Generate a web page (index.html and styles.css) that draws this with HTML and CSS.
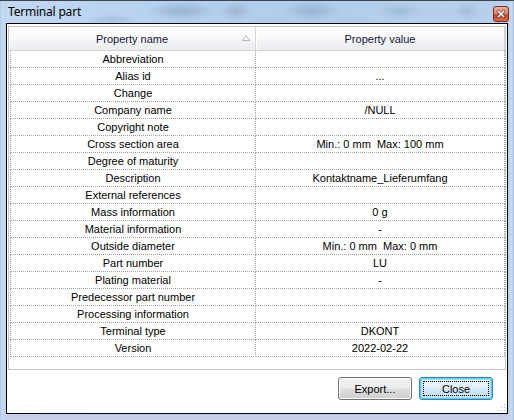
FILE: index.html
```html
<!DOCTYPE html>
<html>
<head>
<meta charset="utf-8">
<link rel="stylesheet" href="styles.css">
</head>
<body>
<div class="window">
  <div class="titlebar">
    <span class="title">Terminal part</span>
    <span class="close-x">
      <svg width="16" height="16" viewBox="0 0 16 16">
        <path d="M5 5 L11 11 M11 5 L5 11" stroke="#5a1d12" stroke-width="3.2" stroke-linecap="square"/>
        <path d="M5 5 L11 11 M11 5 L5 11" stroke="#ffffff" stroke-width="1.8" stroke-linecap="square"/>
      </svg>
    </span>
  </div>
  <div class="client">
    <div class="grid">
      <div class="header">
        <div class="hcell">Property name<svg class="sort" width="8" height="6" viewBox="0 0 8 6"><path d="M4 0.5 L7.5 5.5 L0.5 5.5 Z" fill="none" stroke="#b4b4b4" stroke-width="1"/></svg></div>
        <div class="hcell">Property value</div>
      </div>
      <div class="rows">
        <div class="row"><div class="cell">Abbreviation</div><div class="cell"></div></div>
        <div class="row"><div class="cell">Alias id</div><div class="cell">...</div></div>
        <div class="row"><div class="cell">Change</div><div class="cell"></div></div>
        <div class="row"><div class="cell">Company name</div><div class="cell">/NULL</div></div>
        <div class="row"><div class="cell">Copyright note</div><div class="cell"></div></div>
        <div class="row"><div class="cell">Cross section area</div><div class="cell">Min.: 0 mm&nbsp; Max: 100 mm</div></div>
        <div class="row"><div class="cell">Degree of maturity</div><div class="cell"></div></div>
        <div class="row"><div class="cell">Description</div><div class="cell">Kontaktname_Lieferumfang</div></div>
        <div class="row"><div class="cell">External references</div><div class="cell"></div></div>
        <div class="row"><div class="cell">Mass information</div><div class="cell">0 g</div></div>
        <div class="row"><div class="cell">Material information</div><div class="cell">-</div></div>
        <div class="row"><div class="cell">Outside diameter</div><div class="cell">Min.: 0 mm&nbsp; Max: 0 mm</div></div>
        <div class="row"><div class="cell">Part number</div><div class="cell">LU</div></div>
        <div class="row"><div class="cell">Plating material</div><div class="cell">-</div></div>
        <div class="row"><div class="cell">Predecessor part number</div><div class="cell"></div></div>
        <div class="row"><div class="cell">Processing information</div><div class="cell"></div></div>
        <div class="row"><div class="cell">Terminal type</div><div class="cell">DKONT</div></div>
        <div class="row"><div class="cell">Version</div><div class="cell">2022-02-22</div></div>
      </div>
    </div>
    <div class="footer">
      <button class="btn">Export...</button>
      <button class="btn default"><span class="focus">Close</span></button>
    </div>
    <svg class="grip" width="10" height="10" viewBox="0 0 10 10">
      <rect x="8" y="2" width="1" height="1" fill="#b8b8b8"/>
      <rect x="5" y="5" width="1" height="1" fill="#b8b8b8"/>
      <rect x="8" y="5" width="1" height="1" fill="#b8b8b8"/>
      <rect x="2" y="8" width="1" height="1" fill="#b8b8b8"/>
      <rect x="5" y="8" width="1" height="1" fill="#b8b8b8"/>
      <rect x="8" y="8" width="1" height="1" fill="#b8b8b8"/>
      <rect x="9" y="3" width="1" height="1" fill="#ffffff"/>
      <rect x="6" y="6" width="1" height="1" fill="#ffffff"/>
      <rect x="9" y="6" width="1" height="1" fill="#ffffff"/>
      <rect x="3" y="9" width="1" height="1" fill="#ffffff"/>
      <rect x="6" y="9" width="1" height="1" fill="#ffffff"/>
      <rect x="9" y="9" width="1" height="1" fill="#ffffff"/>
    </svg>
  </div>
</div>
</body>
</html>
```
FILE: styles.css
```css
html, body {
  margin: 0;
  padding: 0;
  background: #b9d3ee;
}
body {
  width: 514px;
  height: 420px;
  overflow: hidden;
  font-family: "Liberation Sans", Arial, sans-serif;
  font-size: 11px;
  color: #000;
}
.window {
  box-sizing: border-box;
  width: 514px;
  height: 420px;
  display: flex;
  flex-direction: column;
  padding: 0 6px 6px 6px;
  border-top: 1px solid #3c4450;
  background:
    linear-gradient(to right, #aac6e6 0, #c8dcf2 2px, #bcd4ee 5px, rgba(188,212,238,0) 7px),
    linear-gradient(to left, #9fb8d8 0, #c6dbf1 2px, rgba(188,212,238,0) 7px),
    linear-gradient(to bottom, rgba(0,0,0,0) 412px, #c3cbe8 414px, #cdd2ec 420px),
    radial-gradient(ellipse 34px 10px at 182px 10px, #9ab5d6 0, #a3bddb 40%, rgba(163,189,219,0) 100%),
    radial-gradient(ellipse 18px 10px at 236px 10px, #9db8d8 0, #a6bfdc 40%, rgba(166,191,220,0) 100%),
    radial-gradient(ellipse 30px 10px at 312px 10px, #98b3d4 0, #a2bcdb 40%, rgba(162,188,219,0) 100%),
    radial-gradient(ellipse 24px 9px at 400px 10px, #a2bcdb 0, rgba(162,188,219,0) 100%),
    radial-gradient(ellipse 14px 9px at 467px 10px, #a2bcdb 0, rgba(162,188,219,0) 100%),
    radial-gradient(ellipse 26px 6px at 112px 19px, #a6bfdc 0, rgba(166,191,220,0) 100%),
    linear-gradient(to right, #c2d9f2 0, #b6d1ef 30%, #b2cdec 60%, #b7d0ec 100%);
}
.titlebar {
  height: 22px;
  flex: none;
  display: flex;
  align-items: center;
  justify-content: space-between;
}
.title {
  font-family: "Noto Sans", "Open Sans", sans-serif;
  font-size: 12px;
  margin-left: 2px;
  margin-top: -1px;
  letter-spacing: -0.2px;
  color: #000;
}
.close-x {
  box-sizing: border-box;
  width: 16px;
  height: 16px;
  margin-right: -1px;
  margin-top: 4px;
  border: 1px solid #7a2b1d;
  border-radius: 3px;
  background: linear-gradient(to bottom, #eab1a1 0, #dc8a72 45%, #c9462a 55%, #d86a48 100%);
  display: flex;
  align-items: center;
  justify-content: center;
}
.close-x svg {
  display: block;
}
.client {
  position: relative;
  flex: 1;
  display: flex;
  flex-direction: column;
  border: 1px solid #000;
  background: #fff;
  padding: 2px 1px 0 1px;
}
.grid {
  box-sizing: border-box;
  height: 344px;
  border: 1px solid #bcc4cc;
  flex: none;
}
.header {
  display: grid;
  grid-template-columns: 247px 1fr;
  height: 24px;
  box-sizing: border-box;
  border-bottom: 1px solid #d5d5d5;
}
.hcell {
  position: relative;
  display: flex;
  align-items: center;
  justify-content: center;
  color: #15153a;
  background: linear-gradient(to bottom, #ffffff 0, #fbfbfc 40%, #f3f4f6 60%, #e9ebee 100%);
  border-right: 1px solid #d5d7da;
  box-shadow: inset 1px 0 0 #ffffff;
  padding-top: 1px;
}
.sort {
  position: absolute;
  right: 5px;
  top: 8px;
}
.rows {
  padding-left: 1px;
}
.row {
  display: grid;
  grid-template-columns: 246px 1fr;
  height: 17px;
}
.cell {
  box-sizing: border-box;
  display: flex;
  align-items: center;
  justify-content: center;
  border-right: 1px dotted #a0a0a0;
  border-bottom: 1px dotted #a0a0a0;
  white-space: pre;
  line-height: 16px;
}
.cell:first-child {
  border-left: 1px dotted #a0a0a0;
}
.footer {
  display: flex;
  justify-content: flex-end;
  gap: 7px;
  padding: 7px 13px 0 0;
}
.btn {
  box-sizing: border-box;
  width: 74px;
  height: 23px;
  font-family: "Liberation Sans", Arial, sans-serif;
  font-size: 11px;
  color: #000;
  border: 1px solid #707070;
  border-radius: 3px;
  background: linear-gradient(to bottom, #f2f2f2 0, #ebebeb 48%, #dddddd 52%, #cfcfcf 100%);
  box-shadow: inset 0 0 0 1px #fbfbfb;
  padding: 0;
  display: flex;
  align-items: center;
  justify-content: center;
}
.btn.default {
  border-color: #3c7fb1;
  box-shadow: inset 0 0 0 1px #48d3fb, inset 0 0 0 2px #a7e4fb;
  background: linear-gradient(to bottom, #eaf6fd 0, #e2f0fa 48%, #d4e8f6 52%, #c6deef 100%);
}
.focus {
  box-sizing: border-box;
  width: 66px;
  height: 15px;
  border: 1px dotted #000;
  display: flex;
  align-items: center;
  justify-content: center;
}
.grip {
  position: absolute;
  right: 1px;
  bottom: 1px;
}
```
